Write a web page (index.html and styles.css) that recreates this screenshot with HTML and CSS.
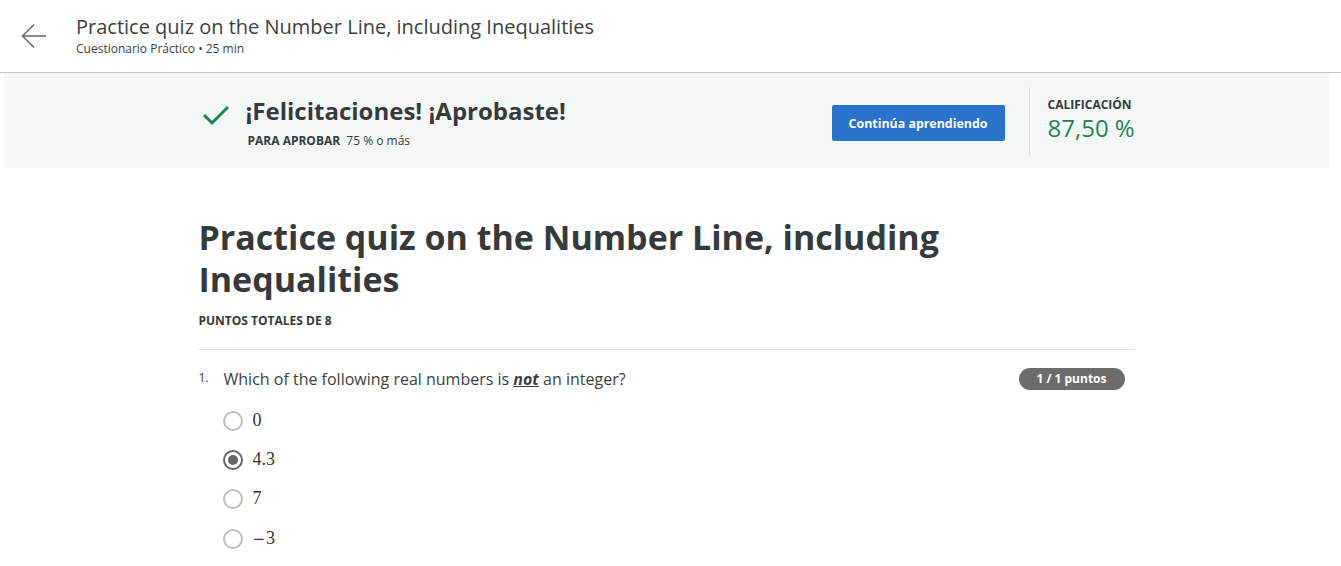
FILE: index.html
```html
<!DOCTYPE html>
<html lang="es">
<head>
<meta charset="utf-8">
<title>Practice quiz</title>
<link rel="stylesheet" href="styles.css">
</head>
<body>
<header class="topbar">
  <button class="back" aria-label="Volver">
    <svg width="26" height="26" viewBox="0 0 26 26"><path d="M25 13H2M13 1.5L1.5 13L13 24.5" fill="none" stroke="#666" stroke-width="1.4"/></svg>
  </button>
  <div class="topbar-text">
    <div class="topbar-title">Practice quiz on the Number Line, including Inequalities</div>
    <div class="topbar-sub">Cuestionario Práctico • 25 min</div>
  </div>
</header>
<main class="main">
  <section class="banner">
    <div class="banner-inner">
      <div class="result">
        <svg class="check" width="28" height="22" viewBox="0 0 28 22"><path d="M2 11L10 19L26 3" fill="none" stroke="#1f8354" stroke-width="3"/></svg>
        <div>
          <div class="result-title">¡Felicitaciones! ¡Aprobaste!</div>
          <div class="result-sub"><b>PARA APROBAR</b> 75 % o más</div>
        </div>
      </div>
      <button class="cta">Continúa aprendiendo</button>
      <div class="grade">
        <div class="grade-label">CALIFICACIÓN</div>
        <div class="grade-value">87,50 %</div>
      </div>
    </div>
  </section>
  <section class="quiz">
    <h1 class="quiz-title">Practice quiz on the Number Line, including Inequalities</h1>
    <div class="quiz-points">PUNTOS TOTALES DE 8</div>
    <div class="question">
      <div class="q-head">
        <span class="q-num">1.</span>
        <span class="q-text">Which of the following real numbers is <em class="not">not</em> an integer?</span>
        <span class="badge">1 / 1 puntos</span>
      </div>
      <ul class="options">
        <li class="option"><span class="radio"></span><span class="math">0</span></li>
        <li class="option"><span class="radio checked"></span><span class="math">4.3</span></li>
        <li class="option"><span class="radio"></span><span class="math">7</span></li>
        <li class="option"><span class="radio"></span><span class="math"><span class="minus">−</span>3</span></li>
      </ul>
    </div>
  </section>
</main>
</body>
</html>
```
FILE: styles.css
```css
* { box-sizing: border-box; }
html, body { margin: 0; padding: 0; background: #fff; }
body {
  font-family: "Open Sans", "Liberation Sans", sans-serif;
  color: #373a3c;
}
.topbar {
  height: 73px;
  border-bottom: 1px solid #c4c7c8;
  display: flex;
  align-items: flex-start;
}
.back {
  border: 0;
  background: none;
  padding: 0;
  margin: 23px 0 0 21px;
  width: 26px;
  height: 26px;
  cursor: pointer;
  display: flex;
}
.topbar-text { margin: 13px 0 0 29px; }
.topbar-title {
  font-size: 20px;
  line-height: 27px;
  color: #3c3f41;
}
.topbar-sub {
  font-size: 12px;
  line-height: 15px;
  color: #3c3f41;
  margin-top: 1px;
}
.main {
  padding: 0 12px 0 4px;
}
.banner {
  background: #f3f8f6;
  height: 95px;
  display: flex;
  justify-content: center;
}
.banner-inner {
  width: 936px;
  display: flex;
  align-items: flex-start;
}
.result {
  display: flex;
  align-items: flex-start;
  flex: 1;
  padding-top: 22px;
  padding-left: 3px;
}
.check { margin: 9px 16px 0 0; }
.result-title {
  font-size: 24px;
  font-weight: 700;
  line-height: 32px;
  color: #373a3c;
}
.result-sub {
  font-size: 12px;
  line-height: 16px;
  margin-top: 6px;
  margin-left: 2px;
  color: #373a3c;
}
.result-sub b { margin-right: 3px; }
.cta {
  margin-top: 32px;
  width: 173px;
  height: 36px;
  background: #2a73cc;
  color: #fff;
  border: 0;
  border-radius: 2px;
  font-family: inherit;
  font-size: 12.4px;
  font-weight: 700;
  padding: 0;
}
.grade {
  margin: 14px 0 13px 24px;
  border-left: 1px solid #dde0e0;
  padding: 11px 0 0 18px;
  height: 68px;
  width: 106px;
  white-space: nowrap;
}
.grade-label {
  font-size: 12px;
  font-weight: 700;
  line-height: 14px;
  color: #373a3c;
}
.grade-value {
  font-size: 24px;
  line-height: 32px;
  color: #1f8354;
}
.quiz {
  width: 936px;
  margin: 0 auto;
  padding-top: 48px;
}
.quiz-title {
  margin: 0;
  font-size: 34px;
  line-height: 42px;
  font-weight: 700;
  color: #373a3c;
  max-width: 760px;
}
.quiz-points {
  font-size: 12px;
  font-weight: 700;
  line-height: 16px;
  margin-top: 13px;
  padding-bottom: 20px;
  border-bottom: 1px solid #e1e1e1;
}
.question { padding-top: 18px; }
.q-head {
  display: flex;
  align-items: center;
}
.q-num {
  font-size: 12px;
  width: 25px;
  align-self: flex-start;
  padding-top: 1px;
}
.q-text {
  font-size: 16px;
  line-height: 22px;
  flex: 1;
  color: #3c3f41;
}
.not {
  font-weight: 700;
  text-decoration: underline;
}
.badge {
  background: #6c6c6c;
  color: #fff;
  font-size: 12px;
  font-weight: 700;
  line-height: 22px;
  height: 22px;
  border-radius: 11px;
  width: 106px;
  text-align: center;
  margin-right: 10px;
}
.options {
  list-style: none;
  margin: 11px 0 0 24px;
  padding: 0;
}
.option {
  display: flex;
  align-items: center;
  height: 39px;
}
.option:last-child { margin-top: 1px; }
.radio {
  width: 20px;
  height: 20px;
  border: 2px solid #bdbdbd;
  border-radius: 50%;
  margin-right: 10px;
  display: flex;
  align-items: center;
  justify-content: center;
}
.radio.checked { border-color: #666; }
.radio.checked::after {
  content: "";
  width: 10px;
  height: 10px;
  border-radius: 50%;
  background: #666;
}
.math {
  font-family: "Liberation Serif", "DejaVu Serif", serif;
  font-size: 18px;
  color: #333;
}
.minus {
  font-family: "DejaVu Serif", serif;
  font-size: 15px;
  margin-right: 1px;
}
```
